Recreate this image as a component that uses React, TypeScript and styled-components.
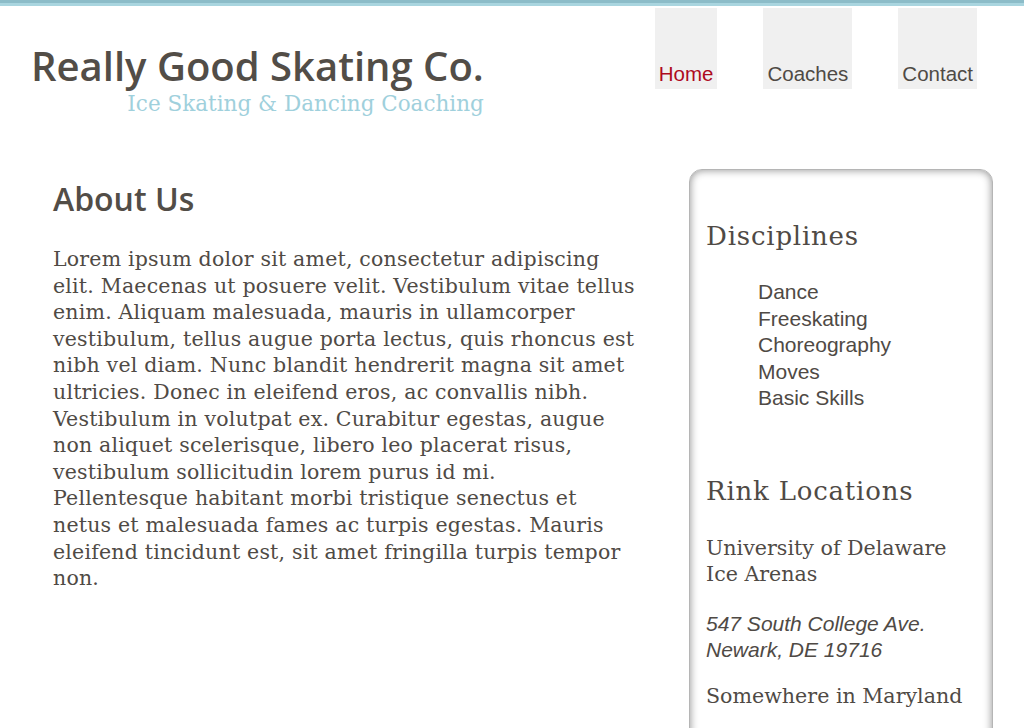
import React from "react";
import styled, { createGlobalStyle } from "styled-components";

const Global = createGlobalStyle`
  html, body { margin: 0; padding: 0; background: #fff; }
  body { color: #4f4a45; font-family: "DejaVu Serif", serif; overflow: hidden; }
`;

const TopBar = styled.div`
  height: 6px;
  background: linear-gradient(#8cbcc8 0, #8cbcc8 3px, #a9d5df 3px, #a9d5df 6px);
`;

const Header = styled.header`
  display: flex;
  justify-content: space-between;
  align-items: flex-start;
  padding: 2px 47px 0 31px;
`;

const Brand = styled.div`
  display: flex;
  flex-direction: column;
  align-items: flex-end;
  padding-top: 33px;
`;

const Title = styled.h1`
  margin: 0;
  font-family: "Open Sans", sans-serif;
  font-weight: 600;
  font-size: 40px;
  line-height: 50px;
  color: #524d47;
`;

const Tagline = styled.div`
  font-family: "DejaVu Serif", serif;
  font-size: 21.5px;
  line-height: 26px;
  color: #9fd0dc;
`;

const Nav = styled.nav`
  display: flex;
  gap: 46px;
`;

const NavItem = styled.a<{ $active?: boolean }>`
  display: flex;
  align-items: flex-end;
  height: 81px;
  padding: 0 4px 3px;
  box-sizing: border-box;
  background: #f0f0f0;
  font-family: "Liberation Sans", Arial, sans-serif;
  font-size: 20.5px;
  color: ${(p) => (p.$active ? "#ae0a1e" : "#4f4a45")};
  text-decoration: none;
`;

const Main = styled.main`
  display: flex;
  justify-content: space-between;
  align-items: flex-start;
  padding: 52px 31px 0 53px;
`;

const Article = styled.article`
  padding-top: 10px;
`;

const Heading = styled.h2`
  margin: 0;
  font-family: "Open Sans", sans-serif;
  font-weight: 600;
  font-size: 32px;
  line-height: 40px;
  color: #524d47;
`;

const Body = styled.p`
  margin: 27px 0 0;
  font-size: 20.5px;
  line-height: 26.6px;
  letter-spacing: 0.2px;
  white-space: nowrap;
  color: #4f4a45;
`;

const Sidebar = styled.aside`
  width: 304px;
  height: 620px;
  box-sizing: border-box;
  border: 1px solid #b5b5b5;
  border-radius: 13px;
  box-shadow: inset 0 0 9px rgba(0, 0, 0, 0.45);
  padding: 50px 16px 0;
`;

const SideHeading = styled.h3`
  margin: 0;
  font-family: "DejaVu Serif", serif;
  font-weight: normal;
  font-size: 26px;
  line-height: 32px;
  letter-spacing: 0.8px;
  color: #4f4a45;
`;

const List = styled.ul`
  list-style: none;
  margin: 27px 0 0;
  padding: 0 0 0 52px;
  font-family: "Liberation Sans", Arial, sans-serif;
  font-size: 21px;
  line-height: 26.5px;
`;

const Section = styled.div<{ $gap: number }>`
  margin-top: ${(p) => p.$gap}px;
`;

const Place = styled.p<{ $gap: number }>`
  margin: ${(p) => p.$gap}px 0 0;
  font-size: 20.6px;
  line-height: 26.5px;
`;

const Address = styled.address`
  margin: 23px 0 0;
  font-family: "Liberation Sans", Arial, sans-serif;
  font-size: 21px;
  line-height: 26.5px;
  font-style: italic;
`;

const lines = [
  "Lorem ipsum dolor sit amet, consectetur adipiscing",
  "elit. Maecenas ut posuere velit. Vestibulum vitae tellus",
  "enim. Aliquam malesuada, mauris in ullamcorper",
  "vestibulum, tellus augue porta lectus, quis rhoncus est",
  "nibh vel diam. Nunc blandit hendrerit magna sit amet",
  "ultricies. Donec in eleifend eros, ac convallis nibh.",
  "Vestibulum in volutpat ex. Curabitur egestas, augue",
  "non aliquet scelerisque, libero leo placerat risus,",
  "vestibulum sollicitudin lorem purus id mi.",
  "Pellentesque habitant morbi tristique senectus et",
  "netus et malesuada fames ac turpis egestas. Mauris",
  "eleifend tincidunt est, sit amet fringilla turpis tempor",
  "non.",
];

export default function App() {
  return (
    <>
      <Global />
      <TopBar />
      <Header>
        <Brand>
          <Title>Really Good Skating Co.</Title>
          <Tagline>Ice Skating &amp; Dancing Coaching</Tagline>
        </Brand>
        <Nav>
          <NavItem href="#" $active>Home</NavItem>
          <NavItem href="#">Coaches</NavItem>
          <NavItem href="#">Contact</NavItem>
        </Nav>
      </Header>
      <Main>
        <Article>
          <Heading>About Us</Heading>
          <Body>
            {lines.map((l, i) => (
              <React.Fragment key={i}>
                {l}
                {i < lines.length - 1 && <br />}
              </React.Fragment>
            ))}
          </Body>
        </Article>
        <Sidebar>
          <SideHeading>Disciplines</SideHeading>
          <List>
            <li>Dance</li>
            <li>Freeskating</li>
            <li>Choreography</li>
            <li>Moves</li>
            <li>Basic Skills</li>
          </List>
          <Section $gap={63}>
            <SideHeading>Rink Locations</SideHeading>
            <Place $gap={28}>
              University of Delaware
              <br />
              Ice Arenas
            </Place>
            <Address>
              547 South College Ave.
              <br />
              Newark, DE 19716
            </Address>
            <Place $gap={19}>Somewhere in Maryland</Place>
          </Section>
        </Sidebar>
      </Main>
    </>
  );
}
